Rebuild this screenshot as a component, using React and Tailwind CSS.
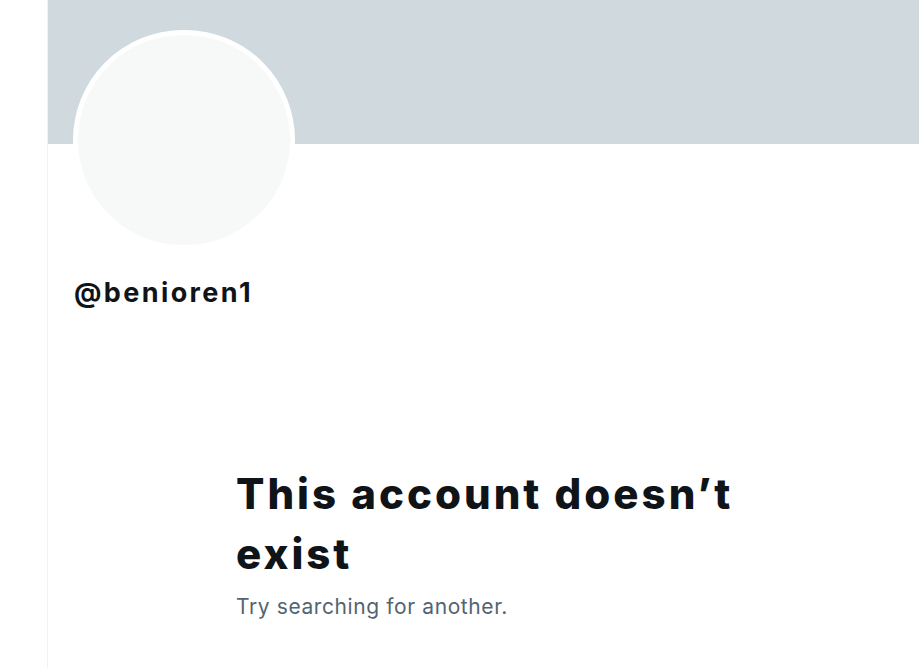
export default function App() {
  return (
    <div className="min-h-screen w-full bg-white flex overflow-hidden" style={{ fontFamily: "Inter, 'Noto Sans', sans-serif" }}>
      <div className="ml-[47px] flex-1 min-h-[668px] border-l border-[#eff3f4]">
        <div className="h-[144px] bg-[#cfd9de]" />
        <div className="pl-[25px]">
          <div className="-mt-[114px] w-[222px] h-[220px] rounded-full border-[5px] border-white bg-[#f7f9f9]" />
          <div className="mt-[27px] text-[27px] leading-[32px] tracking-[2.4px] font-bold text-[#0f1419] pl-[1px]">@benioren1</div>
        </div>
        <div className="pl-[188px] mt-[155px]">
          <h1 className="text-[42px] leading-[60px] tracking-[3px] font-extrabold text-[#0f1419] max-w-[520px]">This account doesn’t exist</h1>
          <p className="mt-[9px] text-[21px] leading-[28px] tracking-[0.6px] text-[#536471]">Try searching for another.</p>
        </div>
      </div>
    </div>
  );
}
